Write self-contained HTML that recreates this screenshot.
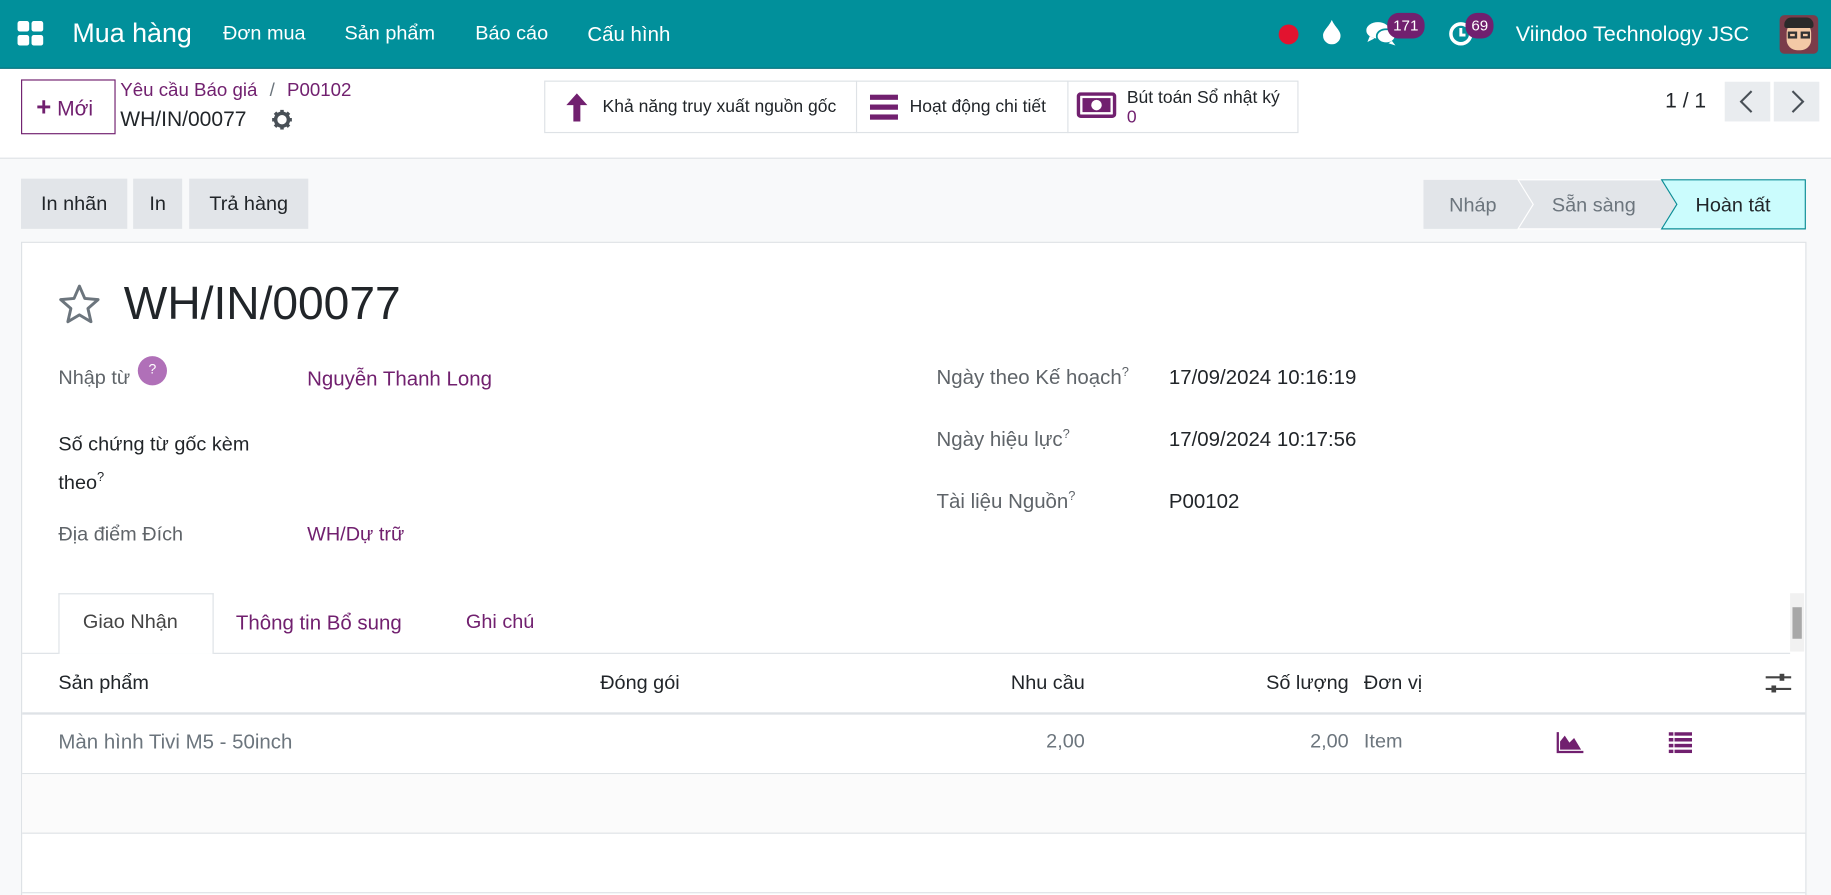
<!DOCTYPE html>
<html><head><meta charset="utf-8"><style>
*{box-sizing:border-box;margin:0;padding:0}
html,body{width:1831px;height:895px;overflow:hidden;background:#f8f9fa}
#w{width:1568px;height:767px;transform:scale(1.16773);transform-origin:0 0;position:relative;font-family:"Liberation Sans",Roboto,sans-serif;color:#212529;font-size:17px}
.a{position:absolute;white-space:nowrap}
.p{color:#71206f}
.nav{position:absolute;left:0;top:0;width:1568px;height:59px;background:#01909b;border-bottom:1px solid #06707a;color:#fff}
.cp{position:absolute;left:0;top:59px;width:1568px;height:77px;background:#fff;border-bottom:1px solid #dee2e6}
.btn{position:absolute;background:#e2e5e9;height:43px;top:153px;line-height:43px;text-align:center;font-size:17px}
.sheet{position:absolute;left:18px;top:207px;width:1529px;height:570px;background:#fff;border:1px solid #dee2e6}
.lbl{color:#5f6469}
.sup{font-size:11px;vertical-align:super}
.badge{position:absolute;background:#71206f;color:#fff;border-radius:10px;font-size:13px;height:22px;line-height:22px;padding:0 5px}
.r{text-align:right}
</style></head><body><div id="w">
<div class="nav">
 <svg class="a" style="left:15px;top:18px" width="23" height="22" viewBox="0 0 23 22"><rect x="0" y="0" width="10" height="9" rx="2" fill="#fff"/><rect x="12" y="0" width="10" height="9" rx="2" fill="#fff"/><rect x="0" y="12" width="10" height="9" rx="2" fill="#fff"/><rect x="12" y="12" width="10" height="9" rx="2" fill="#fff"/></svg>
 <div class="a" style="left:62px;top:15px;font-size:23px">Mua hàng</div>
 <div class="a" style="left:191px;top:19px">Đơn mua</div>
 <div class="a" style="left:295px;top:19px">Sản phẩm</div>
 <div class="a" style="left:407px;top:19px">Báo cáo</div>
 <div class="a" style="left:503px;top:19px;font-size:17.5px">Cấu hình</div>
 <div class="a" style="left:1095px;top:21px;width:17px;height:17px;border-radius:50%;background:#e2132f"></div>
 <svg class="a" style="left:1133px;top:17px" width="15" height="21" viewBox="0 0 15 21"><path d="M7.5 0C5 6 0 9 0 13.5a7.5 7.5 0 0 0 15 0C15 9 10 6 7.5 0z" fill="#fff"/></svg>
 <svg class="a" style="left:1170px;top:18px" width="26" height="22" viewBox="0 0 26 22"><ellipse cx="10" cy="8" rx="10" ry="7" fill="#fff"/><path d="M3 13l-2 5 6-3z" fill="#fff"/><ellipse cx="17" cy="13" rx="8" ry="6" fill="#fff" stroke="#01909b" stroke-width="1.5"/><path d="M22 17l3 4-6-2z" fill="#fff"/></svg>
 <div class="badge" style="left:1188px;top:11px">171</div>
 <svg class="a" style="left:1240px;top:18px" width="22" height="22" viewBox="0 0 22 22"><circle cx="11" cy="11" r="8.5" fill="none" stroke="#fff" stroke-width="3"/><path d="M11 6v6h4" stroke="#fff" stroke-width="2.5" fill="none"/></svg>
 <div class="badge" style="left:1255px;top:11px">69</div>
 <div class="a" style="left:1298px;top:18px;font-size:18.5px">Viindoo Technology JSC</div>
 <div class="a" style="left:1524px;top:13px;width:33px;height:33px;border-radius:4px;background:#7a3c4a;overflow:hidden"><div style="position:absolute;left:6px;top:6px;width:21px;height:24px;border-radius:9px;background:#f3c9a6"></div><div style="position:absolute;left:4px;top:2px;width:25px;height:9px;border-radius:6px 6px 2px 2px;background:#2a2a2a"></div><div style="position:absolute;left:7px;top:14px;width:8px;height:6px;border:2px solid #333"></div><div style="position:absolute;left:18px;top:14px;width:8px;height:6px;border:2px solid #333"></div></div>
</div>
<div class="cp">
 <div class="a" style="left:18px;top:9px;width:81px;height:47px;border:1px solid #71206f;line-height:45px;padding-left:12px;font-size:18px" ><span class="p" style="font-weight:bold;font-size:22px">+</span> <span class="p">Mới</span></div>
 <div class="a p" style="left:103px;top:10px;font-size:16px">Yêu cầu Báo giá <span style="color:#6c757d;margin:0 6px">/</span> P00102</div>
 <div class="a" style="left:103px;top:33px;font-size:18px">WH/IN/00077</div>
 <svg class="a" style="left:233px;top:35px" width="17" height="17" viewBox="0 0 17 17"><circle cx="8.5" cy="8.5" r="5.5" fill="none" stroke="#495057" stroke-width="3"/><g stroke="#495057" stroke-width="3"><path d="M8.5 0v3M8.5 14v3M0 8.5h3M14 8.5h3M2.5 2.5l2 2M12.5 12.5l2 2M2.5 14.5l2-2M12.5 4.5l2-2"/></g></svg>
 <div class="a" style="left:466px;top:10px;width:646px;height:45px;border:1px solid #dee2e6;background:#fff"></div>
 <div class="a" style="left:733px;top:10px;width:1px;height:45px;background:#dee2e6"></div>
 <div class="a" style="left:914px;top:10px;width:1px;height:45px;background:#dee2e6"></div>
 <svg class="a" style="left:483px;top:20px" width="22" height="26" viewBox="0 0 22 26"><path d="M11 1L2 11h6v14h6V11h6z" fill="#71206f"/></svg>
 <div class="a" style="left:516px;top:24px;font-size:15px">Khả năng truy xuất nguồn gốc</div>
 <svg class="a" style="left:745px;top:22px" width="24" height="22" viewBox="0 0 24 22"><rect y="0" width="24" height="4.5" fill="#71206f"/><rect y="8.5" width="24" height="4.5" fill="#71206f"/><rect y="17" width="24" height="4.5" fill="#71206f"/></svg>
 <div class="a" style="left:779px;top:24px;font-size:15px">Hoạt động chi tiết</div>
 <svg class="a" style="left:922px;top:20px" width="34" height="22" viewBox="0 0 34 22"><rect x="1.5" y="1.5" width="31" height="19" rx="2" fill="none" stroke="#71206f" stroke-width="3"/><rect x="5" y="5" width="24" height="12" fill="#71206f"/><circle cx="17" cy="11" r="4.5" fill="#fff"/></svg>
 <div class="a" style="left:965px;top:16px;font-size:15px;line-height:17px">Bút toán Sổ nhật ký<br><span class="p">0</span></div>
 <div class="a" style="left:1426px;top:17px;font-size:18px">1 / 1</div>
 <div class="a" style="left:1477px;top:11px;width:39px;height:34px;background:#e9ecef"></div>
 <div class="a" style="left:1519px;top:11px;width:39px;height:34px;background:#e9ecef"></div>
 <svg class="a" style="left:1489px;top:18px" width="14" height="20" viewBox="0 0 14 20"><path d="M11 1L2 10l9 9" stroke="#495057" stroke-width="1.8" fill="none"/></svg>
 <svg class="a" style="left:1532px;top:18px" width="14" height="20" viewBox="0 0 14 20"><path d="M3 1l9 9-9 9" stroke="#495057" stroke-width="1.8" fill="none"/></svg>
</div>
<div class="btn" style="left:18px;width:91px">In nhãn</div>
<div class="btn" style="left:114px;width:42px">In</div>
<div class="btn" style="left:162px;width:102px">Trả hàng</div>
<svg class="a" style="left:1218px;top:153px" width="330" height="44" viewBox="0 0 330 44">
 <path d="M1 1H82L95 22L82 43H1z" fill="#e2e5e9"/>
 <path d="M82 1H205L218 22L205 43H82L95 22z" fill="#e2e5e9" stroke="#fff" stroke-width="1"/>
 <path d="M205 1H328V43H205L218 22z" fill="#cbfcfd" stroke="#0c8d96" stroke-width="1"/>
 <text x="23" y="28" font-family="Liberation Sans,sans-serif" font-size="17" fill="#6c757d">Nháp</text>
 <text x="111" y="28" font-family="Liberation Sans,sans-serif" font-size="17" fill="#6c757d">Sẵn sàng</text>
 <text x="234" y="28" font-family="Liberation Sans,sans-serif" font-size="17" fill="#212529">Hoàn tất</text>
</svg>
<div class="sheet"></div>
<svg class="a" style="left:50px;top:243px" width="36" height="35" viewBox="0 0 36 35"><path d="M18 2l4.6 10.6 11.4 1-8.7 7.6 2.6 11.3L18 26.6 8.1 32.5l2.6-11.3L2 13.6l11.4-1z" fill="none" stroke="#6c757d" stroke-width="2.5" stroke-linejoin="round"/></svg>
<div class="a" style="left:106px;top:238px;font-size:39.5px">WH/IN/00077</div>
<div class="a lbl" style="left:50px;top:314px">Nhập từ</div>
<div class="a" style="left:118px;top:305px;width:25px;height:25px;border-radius:50%;background:#b070b8;color:#fff;font-size:12px;text-align:center;line-height:23px">?</div>
<div class="a p" style="left:263px;top:314px;font-size:17.5px">Nguyễn Thanh Long</div>
<div class="a" style="left:50px;top:366px;line-height:29px;white-space:normal;width:200px">Số chứng từ gốc kèm theo<span class="sup">?</span></div>
<div class="a lbl" style="left:50px;top:448px">Địa điểm Đích</div>
<div class="a p" style="left:263px;top:448px">WH/Dự trữ</div>
<div class="a lbl" style="left:802px;top:313px;font-size:17.5px">Ngày theo Kế hoạch<span class="sup">?</span></div>
<div class="a" style="left:1001px;top:313px;font-size:17.5px">17/09/2024 10:16:19</div>
<div class="a lbl" style="left:802px;top:366px;font-size:17.5px">Ngày hiệu lực<span class="sup">?</span></div>
<div class="a" style="left:1001px;top:366px;font-size:17.5px">17/09/2024 10:17:56</div>
<div class="a lbl" style="left:802px;top:419px;font-size:17.5px">Tài liệu Nguồn<span class="sup">?</span></div>
<div class="a" style="left:1001px;top:419px;font-size:17.5px">P00102</div>
<div class="a" style="left:19px;top:559px;width:1514px;height:1px;background:#dee2e6"></div>
<div class="a" style="left:50px;top:508px;width:133px;height:52px;border:1px solid #dee2e6;border-bottom:none;background:#fff"></div>
<div class="a" style="left:71px;top:523px;color:#444">Giao Nhận</div>
<div class="a p" style="left:202px;top:523px;font-size:17.5px">Thông tin Bổ sung</div>
<div class="a p" style="left:399px;top:523px">Ghi chú</div>
<div class="a" style="left:1533px;top:508px;width:12px;height:50px;background:#f1f1f1"></div>
<div class="a" style="left:1535px;top:520px;width:8px;height:27px;background:#a8a8a8"></div>
<div class="a" style="left:19px;top:610px;width:1527px;height:2px;background:#dee2e6"></div>
<div class="a" style="left:50px;top:575px">Sản phẩm</div>
<div class="a" style="left:514px;top:575px">Đóng gói</div>
<div class="a r" style="left:729px;width:200px;top:575px">Nhu cầu</div>
<div class="a r" style="left:955px;width:200px;top:575px">Số lượng</div>
<div class="a" style="left:1168px;top:575px">Đơn vị</div>
<svg class="a" style="left:1512px;top:575px" width="22" height="20" viewBox="0 0 22 20"><path d="M0 5h22M0 15h22" stroke="#444" stroke-width="1.8"/><rect x="12" y="2" width="4" height="6" fill="#444"/><rect x="5" y="12" width="4" height="6" fill="#444"/></svg>
<div class="a" style="left:50px;top:625px;color:#6c757d;font-size:17.5px">Màn hình Tivi M5 - 50inch</div>
<div class="a r" style="left:729px;width:200px;top:625px;color:#6c757d">2,00</div>
<div class="a r" style="left:955px;width:200px;top:625px;color:#6c757d">2,00</div>
<div class="a" style="left:1168px;top:625px;color:#6c757d">Item</div>
<svg class="a" style="left:1333px;top:626px" width="23" height="20" viewBox="0 0 23 20"><path d="M1 1v17h22" stroke="#71206f" stroke-width="2" fill="none"/><path d="M3 16V9l4-5 4 6 4-4 6 10z" fill="#71206f"/></svg>
<svg class="a" style="left:1429px;top:627px" width="20" height="18" viewBox="0 0 20 18"><g fill="#71206f"><rect x="0" y="0" width="4" height="3"/><rect x="5" y="0" width="15" height="3"/><rect x="0" y="5" width="4" height="3"/><rect x="5" y="5" width="15" height="3"/><rect x="0" y="10" width="4" height="3"/><rect x="5" y="10" width="15" height="3"/><rect x="0" y="15" width="4" height="3"/><rect x="5" y="15" width="15" height="3"/></g></svg>
<div class="a" style="left:19px;top:662px;width:1527px;height:1px;background:#dee2e6"></div>
<div class="a" style="left:19px;top:663px;width:1527px;height:50px;background:#fbfbfb"></div>
<div class="a" style="left:19px;top:713px;width:1527px;height:1px;background:#dee2e6"></div>
<div class="a" style="left:19px;top:764px;width:1527px;height:1px;background:#dee2e6"></div>
</div></body></html>
